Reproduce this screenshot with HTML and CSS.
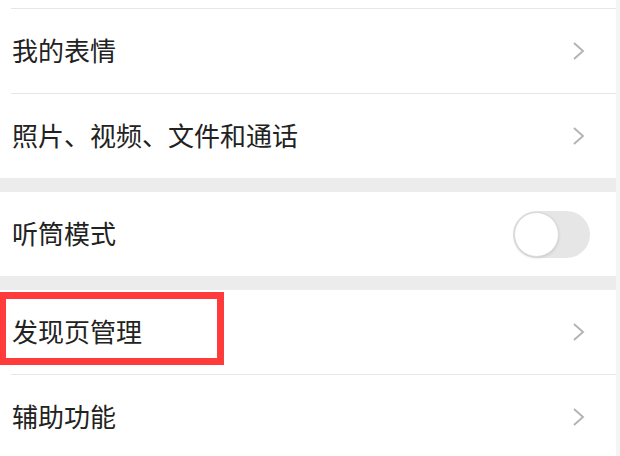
FILE: index.html
```html
<!DOCTYPE html>
<html lang="zh">
<head>
<meta charset="utf-8">
<link rel="stylesheet" href="styles.css">
</head>
<body>
<div class="page">
  <div class="group">
    <div class="stub"></div>
    <div class="row">
      <div class="inner sep">
        <span class="label">我的表情</span>
        <svg class="chev" width="16" height="22" viewBox="0 0 16 22"><polyline points="3,3 12,11 3,19" fill="none" stroke="#b3b3b3" stroke-width="1.9"/></svg>
      </div>
    </div>
    <div class="row">
      <div class="inner sep">
        <span class="label">照片、视频、文件和通话</span>
        <svg class="chev" width="16" height="22" viewBox="0 0 16 22"><polyline points="3,3 12,11 3,19" fill="none" stroke="#b3b3b3" stroke-width="1.9"/></svg>
      </div>
    </div>
  </div>
  <div class="group">
    <div class="row">
      <div class="inner">
        <span class="label">听筒模式</span>
        <span class="toggle"><span class="knob"></span></span>
      </div>
    </div>
  </div>
  <div class="group">
    <div class="row highlight">
      <div class="inner">
        <span class="label">发现页管理</span>
        <svg class="chev" width="16" height="22" viewBox="0 0 16 22"><polyline points="3,3 12,11 3,19" fill="none" stroke="#b3b3b3" stroke-width="1.9"/></svg>
      </div>
      <div class="mark"></div>
    </div>
    <div class="row">
      <div class="inner sep">
        <span class="label">辅助功能</span>
        <svg class="chev" width="16" height="22" viewBox="0 0 16 22"><polyline points="3,3 12,11 3,19" fill="none" stroke="#b3b3b3" stroke-width="1.9"/></svg>
      </div>
    </div>
  </div>
</div>
</body>
</html>
```

FILE: styles.css
```css
html, body {
  margin: 0;
  padding: 0;
  background: #f5f5f5;
}
.page {
  width: 616px;
  height: 456px;
  overflow: hidden;
  background: #ececec;
  font-family: "Noto Sans CJK SC", "Noto Sans", sans-serif;
}
.group {
  background: #ffffff;
}
.group + .group {
  margin-top: 14px;
}
.stub {
  height: 8px;
}
.row {
  padding-left: 11px;
  position: relative;
}
.inner {
  height: 84px;
  display: flex;
  align-items: center;
  justify-content: space-between;
  padding-right: 28px;
  box-sizing: border-box;
}
.inner.sep {
  height: 85px;
  border-top: 1px solid #e6e6e6;
}
.label {
  font-size: 26px;
  line-height: 30px;
  color: #222222;
  margin-left: 1px;
  margin-bottom: 2px;
}
.chev {
  display: block;
  margin-right: 1px;
}
.toggle {
  width: 77px;
  height: 47px;
  border-radius: 24px;
  background: #e6e6e6;
  display: flex;
  align-items: center;
  padding-left: 1px;
  box-sizing: border-box;
  margin-right: -2px;
}
.knob {
  width: 45px;
  height: 45px;
  border-radius: 50%;
  background: #ffffff;
  box-sizing: border-box;
  border: 1px solid #d9d9d9;
  box-shadow: 0 1px 3px rgba(0,0,0,0.12);
}
.mark {
  position: absolute;
  left: 0;
  top: 2px;
  width: 224px;
  height: 73px;
  box-sizing: border-box;
  border: 7px solid #ff3b3b;
  border-left-width: 6px;
}
```
